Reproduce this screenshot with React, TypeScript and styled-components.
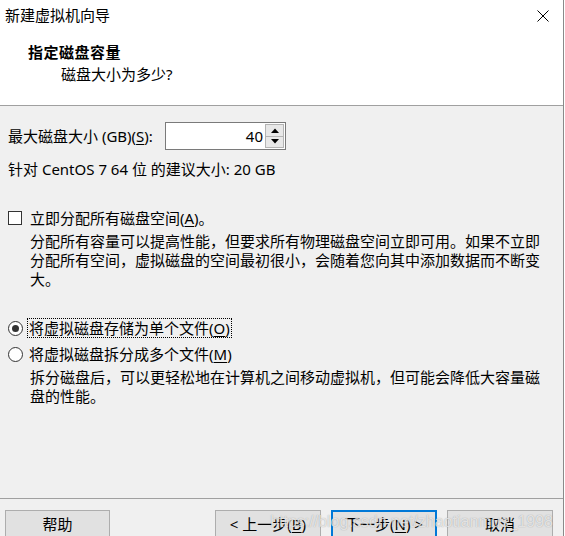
import React from "react";
import styled, { createGlobalStyle } from "styled-components";

const Global = createGlobalStyle`
  html, body { margin: 0; padding: 0; background: #ffffff; }
  body { font-family: "Noto Sans", "Noto Sans CJK SC", sans-serif; }
  * { box-sizing: border-box; }
`;

const Window = styled.div`
  position: relative;
  width: 564px;
  height: 536px;
  border-right: 1px solid #8a8a8a;
  background: #f0f0f0;
  display: flex;
  flex-direction: column;
  overflow: hidden;
  font-family: "Noto Sans", "Noto Sans CJK SC", sans-serif;
  font-size: 15px;
  line-height: 19px;
  color: #000;
`;

const TitleBar = styled.div`
  height: 31px;
  background: #fff;
  display: flex;
  align-items: center;
  justify-content: space-between;
  padding-left: 5px;
`;

const TitleText = styled.span`
  font-size: 15px;
`;

const CloseBox = styled.div`
  width: 40px;
  height: 31px;
  display: flex;
  align-items: center;
  justify-content: center;
`;

const Header = styled.div`
  background: #fff;
  padding: 12px 0 21px;
  border-bottom: 1px solid #a0a0a0;
  display: flex;
  flex-direction: column;
  gap: 3px;
`;

const HeaderTitle = styled.div`
  margin-left: 28px;
  font-weight: 700;
  letter-spacing: 0.5px;
`;

const HeaderSub = styled.div`
  margin-left: 61px;
`;

const Body = styled.div`
  flex: 1;
  padding-left: 8px;
  display: flex;
  flex-direction: column;
`;

const SizeRow = styled.div`
  margin-top: 16px;
  height: 28px;
  display: flex;
  align-items: center;
`;

const SizeLabel = styled.span`
  width: 157px;
`;

const Spin = styled.div`
  width: 121px;
  height: 28px;
  border: 1px solid #7a7a7a;
  background: #fff;
  display: flex;
`;

const SpinValue = styled.div`
  flex: 1;
  text-align: right;
  padding-right: 2px;
  line-height: 26px;
`;

const SpinButtons = styled.div`
  width: 20px;
  display: flex;
  flex-direction: column;
  padding: 1px 1px 1px 0;
`;

const SpinButton = styled.div`
  flex: 1;
  background: #e8e8e8;
  border: 1px solid #b4b4b4;
  display: flex;
  align-items: center;
  justify-content: center;
  & + & { border-top: none; }
`;

const Note = styled.div`
  margin-top: 10px;
`;

const OptionRow = styled.div<{ $mt: number }>`
  margin-top: ${(p) => p.$mt}px;
  height: 20px;
  display: flex;
  align-items: center;
`;

const CheckBox = styled.span`
  width: 14px;
  height: 14px;
  border: 1px solid #333;
  background: #fff;
  margin-right: 6px;
  flex: none;
`;

const Radio = styled.span<{ $checked?: boolean }>`
  width: 15px;
  height: 15px;
  border-radius: 50%;
  border: 1px solid #333;
  background: #fff;
  margin-right: 4px;
  flex: none;
  display: flex;
  align-items: center;
  justify-content: center;
  &::after {
    content: "";
    display: ${(p) => (p.$checked ? "block" : "none")};
    width: 7px;
    height: 7px;
    border-radius: 50%;
    background: #333;
  }
`;

const OptionLabel = styled.span<{ $focused?: boolean }>`
  padding: 0 1px;
  border: 1px dotted ${(p) => (p.$focused ? "#000" : "transparent")};
  line-height: 18px;
`;

const Key = styled.span`
  text-decoration: underline;
  text-underline-offset: 2px;
`;

const Desc = styled.div<{ $mt: number }>`
  margin-top: ${(p) => p.$mt}px;
  padding-left: 22px;
  white-space: nowrap;
`;

const Footer = styled.div`
  height: 38px;
  border-top: 1px solid #a0a0a0;
  padding: 11px 10px 0 5px;
  display: flex;
  align-items: flex-start;
`;

const ButtonGroup = styled.div`
  margin-left: auto;
  display: flex;
  gap: 10px;
`;

const Button = styled.div<{ $default?: boolean; $w?: number }>`
  width: ${(p) => p.$w ?? 106}px;
  height: 30px;
  background: #e1e1e1;
  border: ${(p) => (p.$default ? "2px solid #0078d7" : "1px solid #adadad")};
  display: flex;
  align-items: center;
  justify-content: center;
  padding-bottom: 2px;
`;

const Watermark = styled.div`
  position: absolute;
  right: 10px;
  bottom: 5px;
  font-family: "Liberation Sans", Arial, sans-serif;
  font-size: 16px;
  line-height: 18px;
  color: rgba(255, 255, 255, 0.7);
  text-shadow: 0 0 1px rgba(90, 90, 90, 0.55);
  pointer-events: none;
`;

const CloseIcon = () => (
  <svg width="12" height="12" viewBox="0 0 12 12">
    <path d="M0.5 0.5 L11.5 11.5 M11.5 0.5 L0.5 11.5" stroke="#000" strokeWidth="1" fill="none" />
  </svg>
);

const Arrow = ({ up }: { up?: boolean }) => (
  <svg width="8" height="5" viewBox="0 0 8 5">
    <path d={up ? "M0 5 L4 0.5 L8 5 Z" : "M0 0 L4 4.5 L8 0 Z"} fill="#000" />
  </svg>
);

export default function App() {
  return (
    <>
      <Global />
      <Window>
        <TitleBar>
          <TitleText>新建虚拟机向导</TitleText>
          <CloseBox>
            <CloseIcon />
          </CloseBox>
        </TitleBar>
        <Header>
          <HeaderTitle>指定磁盘容量</HeaderTitle>
          <HeaderSub>磁盘大小为多少?</HeaderSub>
        </Header>
        <Body>
          <SizeRow>
            <SizeLabel>
              最大磁盘大小 (GB)(<Key>S</Key>):
            </SizeLabel>
            <Spin>
              <SpinValue>40</SpinValue>
              <SpinButtons>
                <SpinButton>
                  <Arrow up />
                </SpinButton>
                <SpinButton>
                  <Arrow />
                </SpinButton>
              </SpinButtons>
            </Spin>
          </SizeRow>
          <Note>针对 CentOS 7 64 位 的建议大小: 20 GB</Note>
          <OptionRow $mt={29}>
            <CheckBox />
            <OptionLabel>
              立即分配所有磁盘空间(<Key>A</Key>)。
            </OptionLabel>
          </OptionRow>
          <Desc $mt={4}>
            分配所有容量可以提高性能，但要求所有物理磁盘空间立即可用。如果不立即
            <br />
            分配所有空间，虚拟磁盘的空间最初很小，会随着您向其中添加数据而不断变
            <br />
            大。
          </Desc>
          <OptionRow $mt={29}>
            <Radio $checked />
            <OptionLabel $focused>
              将虚拟磁盘存储为单个文件(<Key>O</Key>)
            </OptionLabel>
          </OptionRow>
          <OptionRow $mt={6}>
            <Radio />
            <OptionLabel>
              将虚拟磁盘拆分成多个文件(<Key>M</Key>)
            </OptionLabel>
          </OptionRow>
          <Desc $mt={4}>
            拆分磁盘后，可以更轻松地在计算机之间移动虚拟机，但可能会降低大容量磁
            <br />
            盘的性能。
          </Desc>
        </Body>
        <Footer>
          <Button $w={105}>帮助</Button>
          <ButtonGroup>
            <Button>
              &lt; 上一步(<Key>B</Key>)
            </Button>
            <Button $default>
              下一步(<Key>N</Key>) &gt;
            </Button>
            <Button>取消</Button>
          </ButtonGroup>
        </Footer>
        <Watermark>https://blog.csdn.net/zhaotianmus_1998</Watermark>
      </Window>
    </>
  );
}
